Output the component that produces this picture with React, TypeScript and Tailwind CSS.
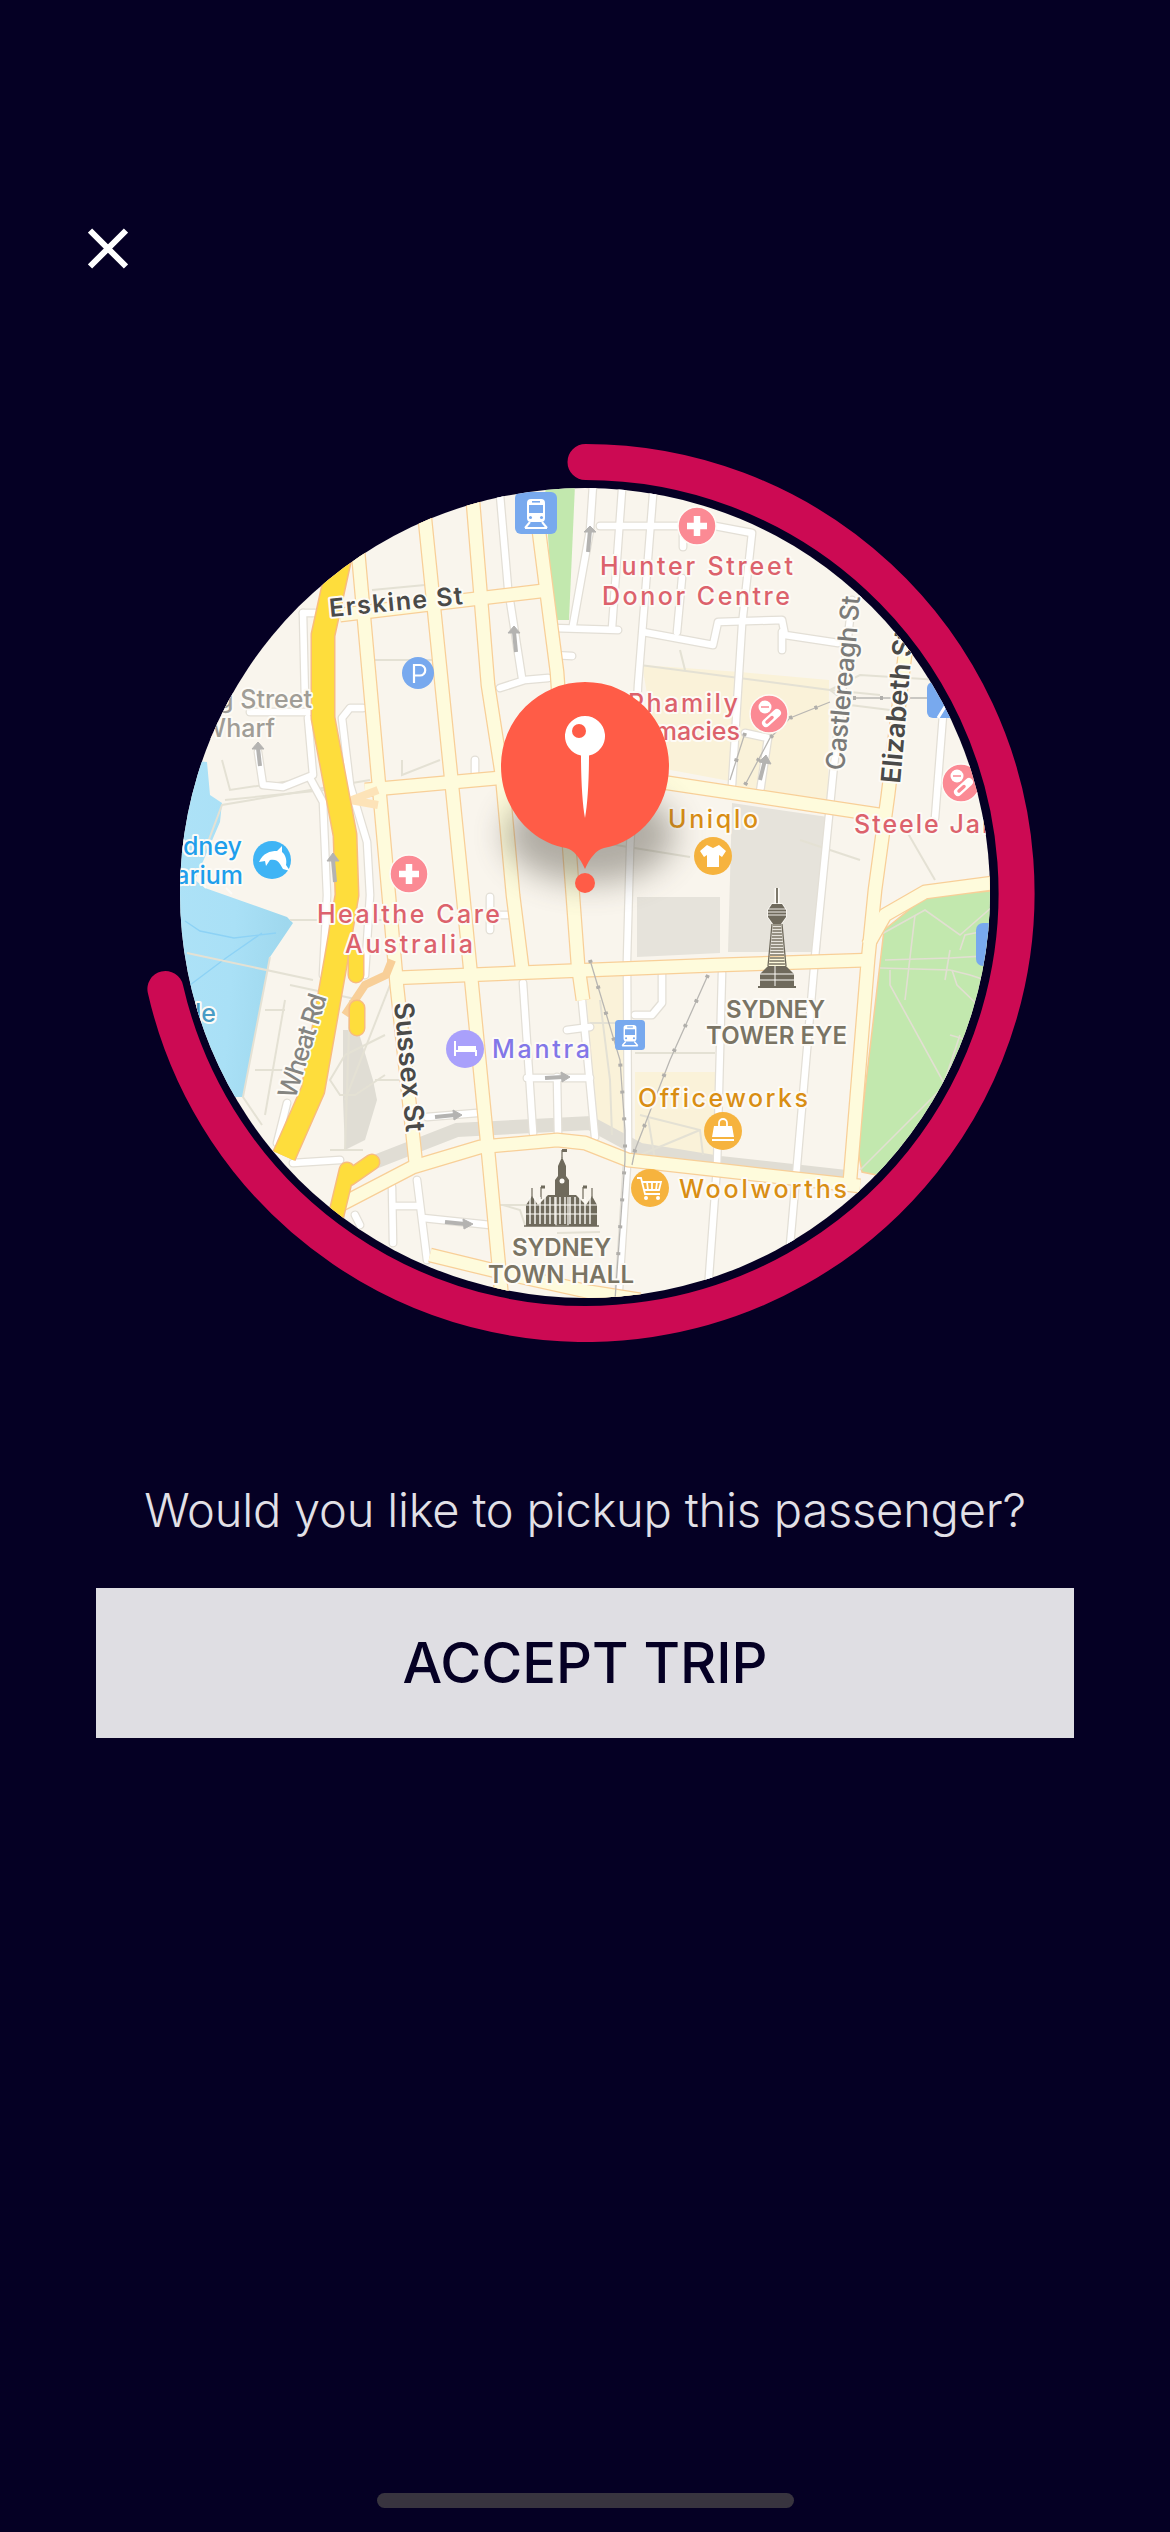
import React from "react";

const FONT = "Inter, 'Liberation Sans', sans-serif";
const C = { cx: 585, cy: 893, r: 405 };

type P = number[];
const d = (p: P) => {
  let s = `M${p[0]} ${p[1]}`;
  for (let i = 2; i < p.length; i += 2) s += `L${p[i]} ${p[i + 1]}`;
  return s;
};

const cream: P[] = [
  [357, 540, 397, 987, 416, 1165],
  [423, 500, 463, 895, 487, 1140, 503, 1310],
  [472, 490, 488, 685, 502, 775, 513, 895, 523, 975],
  [535, 500, 550, 618, 557, 672, 568, 830, 578, 965, 583, 1000],
  [340, 615, 550, 590],
  [365, 790, 510, 777, 585, 770, 668, 783, 880, 815],
  [908, 630, 888, 795, 875, 890, 868, 960, 850, 1180],
  [393, 978, 590, 970, 718, 965, 870, 960],
  [340, 1205, 413, 1167, 480, 1147, 557, 1140, 585, 1143, 628, 1160, 718, 1170, 860, 1186],
  [430, 1255, 500, 1272, 590, 1292, 640, 1300],
  [868, 945, 885, 915, 925, 892, 1000, 882],
];

const white: P[] = [
  [500, 495, 508, 588, 522, 678],
  [500, 688, 525, 680, 548, 678],
  [573, 625, 590, 530, 593, 485],
  [553, 628, 618, 630],
  [553, 655, 572, 656],
  [363, 708, 350, 708, 342, 718, 350, 785, 367, 842, 370, 895, 365, 975],
  [303, 613, 316, 613],
  [303, 613, 305, 700],
  [250, 712, 310, 712],
  [308, 718, 313, 775, 283, 787, 263, 785, 258, 752],
  [310, 778, 323, 802, 327, 895, 323, 975],
  [277, 1143, 287, 1103],
  [475, 760, 475, 775],
  [622, 490, 612, 628],
  [653, 495, 638, 685, 630, 850, 627, 960, 628, 1150, 618, 1305],
  [600, 526, 678, 526],
  [715, 526, 752, 533, 742, 625, 732, 785],
  [643, 632, 713, 645, 718, 622, 782, 620, 785, 635, 838, 643],
  [782, 632, 782, 650],
  [677, 632, 682, 578],
  [683, 528, 683, 547],
  [745, 733, 768, 738, 760, 792],
  [852, 600, 833, 775, 815, 957, 792, 1223, 785, 1300],
  [943, 715, 935, 818],
  [722, 973, 717, 1167, 708, 1290],
  [662, 973, 662, 1003, 652, 1015, 635, 1015],
  [523, 983, 533, 1133],
  [580, 980, 595, 1137],
  [557, 1077, 558, 1133],
  [527, 1078, 590, 1078],
  [567, 1030, 590, 1027],
  [427, 1117, 477, 1113],
  [293, 1163, 340, 1160],
  [392, 1187, 393, 1243],
  [417, 1180, 427, 1260],
  [393, 1206, 417, 1206],
  [423, 1218, 490, 1225],
  [490, 897, 490, 930],
  [490, 915, 512, 915],
  [355, 1215, 360, 1225],
];

const thin: P[] = [
  [375, 660, 440, 660],
  [372, 590, 425, 585],
  [402, 760, 402, 775, 440, 760],
  [222, 760, 230, 790, 310, 778],
  [225, 800, 325, 790],
  [205, 850, 222, 805, 370, 780],
  [187, 953, 313, 980],
  [290, 920, 293, 920, 400, 920],
  [270, 957, 243, 1097, 262, 1125],
  [285, 1000, 265, 1115],
  [265, 1010, 285, 1010],
  [255, 1070, 285, 1070],
  [290, 985, 360, 1000],
  [345, 1055, 385, 1035],
  [345, 1055, 330, 1080, 340, 1095, 355, 1095, 385, 1075],
  [350, 1000, 345, 1150],
  [375, 1080, 405, 1080],
  [390, 985, 345, 1100],
  [363, 1150, 330, 1150],
  [640, 665, 830, 690, 880, 695],
  [680, 650, 685, 670],
  [830, 690, 860, 675, 940, 680],
  [830, 690, 850, 705, 890, 710],
  [690, 857, 585, 840],
  [800, 840, 860, 860],
  [906, 830, 935, 880],
  [635, 1053, 715, 1053],
  [640, 1115, 700, 1130, 703, 1155],
  [648, 1118, 655, 1160],
  [640, 1155, 700, 1130],
  [600, 1000, 610, 1080, 612, 1135],
  [590, 1023, 625, 1023],
  [503, 1205, 520, 1210, 525, 1225],
  [500, 1205, 530, 1205],
  [557, 1233, 600, 1232],
];

const parkPaths: P[] = [
  [885, 960, 950, 958, 1000, 955],
  [880, 935, 925, 910, 960, 935, 1000, 900],
  [880, 968, 950, 970, 970, 975, 1000, 985],
  [890, 970, 890, 985, 945, 1085, 975, 1130],
  [905, 1000, 915, 915],
  [950, 950, 945, 980],
  [945, 1085, 860, 1170],
  [960, 1035, 945, 1080],
  [950, 1035, 985, 1045],
  [985, 1000, 1000, 1010],
  [952, 970, 957, 985, 985, 1012],
  [960, 950, 965, 935, 990, 930],
];

const rail: P[] = [
  [590, 960, 620, 1060, 625, 1130, 625, 1160, 615, 1300],
  [708, 975, 670, 1060, 635, 1150, 632, 1165],
  [745, 785, 770, 738, 790, 718, 830, 702],
  [853, 698, 930, 698],
  [745, 733, 730, 780],
];

type LProps = { x: number; y: number; t: string; c: string; s?: number; w?: number; len?: number; a?: "start" | "end" | "middle"; r?: number; ls?: number };
function L({ x, y, t, c, s = 25, w = 500, len, a = "start", r = 0, ls }: LProps) {
  return (
    <text
      x={x}
      y={y}
      fill={c}
      fontSize={s}
      fontWeight={w}
      textAnchor={a}
      textLength={len}
      lengthAdjust={len ? "spacing" : undefined}
      letterSpacing={ls}
      stroke="#fdfbf6"
      strokeWidth={4}
      strokeLinejoin="round"
      paintOrder="stroke"
      transform={r ? `rotate(${r} ${x} ${y})` : undefined}
    >
      {t}
    </text>
  );
}

const RED = "#dc626c";
const ORG = "#d98e14";
const GRN = "#7a7464";
const PNK = "#fb8a94";
const OC = "#f6b33e";
const BLU = "#78a9ee";

function Cross({ x, y }: { x: number; y: number }) {
  return (
    <g>
      <circle cx={x} cy={y} r={19} fill={PNK} stroke="#fdfbf6" strokeWidth={1.5} />
      <path d={`M${x - 10} ${y}H${x + 10}M${x} ${y - 10}V${y + 10}`} stroke="#fff" strokeWidth={6.5} />
    </g>
  );
}

function Pill({ x, y }: { x: number; y: number }) {
  return (
    <g>
      <circle cx={x} cy={y} r={19} fill={PNK} stroke="#fdfbf6" strokeWidth={1.5} />
      <circle cx={x - 4} cy={y - 7} r={6.5} fill="#fff" />
      <path d={`M${x - 8} ${y - 7}h8`} stroke={PNK} strokeWidth={1.5} />
      <path d={`M${x - 3} ${y + 9}L${x + 8} ${y - 1}`} stroke="#fff" strokeWidth={8} strokeLinecap="round" />
      <path d={`M${x - 2} ${y + 8}L${x + 3} ${y + 3.5}`} stroke={PNK} strokeWidth={3.5} strokeLinecap="round" />
    </g>
  );
}

function Train({ x, y, s, r = 6 }: { x: number; y: number; s: number; r?: number }) {
  const k = s / 42;
  return (
    <g transform={`translate(${x} ${y}) scale(${k})`}>
      <rect width={42} height={42} rx={r} fill={BLU} />
      <rect x={12} y={7} width={18} height={23} rx={4} fill="#fff" />
      <rect x={14} y={13} width={14} height={8} fill={BLU} />
      <rect x={17} y={9} width={8} height={1.6} fill={BLU} />
      <circle cx={15.5} cy={25.5} r={1.5} fill={BLU} />
      <circle cx={26.5} cy={25.5} r={1.5} fill={BLU} />
      <path d="M15 30L10 36M27 30L32 36M10 36H32" stroke="#fff" strokeWidth={2} fill="none" />
    </g>
  );
}

function Tower() {
  const rows = [];
  for (let y = 925; y < 966; y += 3) rows.push(<path key={y} d={`M${777 - 4 - (y - 925) * 0.1} ${y}H${777 + 4 + (y - 925) * 0.1}`} stroke="#7a7464" strokeWidth={1.3} />);
  return (
    <g>
      <path d="M777 888V906" stroke="#fdfbf6" strokeWidth={5} />
      <path d="M777 888V908" stroke="#6f6a5c" strokeWidth={1.8} />
      <path d="M772 904H782L786 910V917L781 924H773L768 917V910Z" fill="#6f6a5c" stroke="#fdfbf6" strokeWidth={1.5} paintOrder="stroke" />
      <path d="M768 909H786M768 912H786M768 915H786" stroke="#fdfbf6" strokeWidth={0.9} />
      {rows}
      <path d="M772 924L768 966M782 924L786 966" stroke="#6f6a5c" strokeWidth={1.3} />
      <path d="M768 966L760 974V986H794V974L786 966Z" fill="#6f6a5c" />
      <path d="M760 974H794M760 980H794M775 966V986" stroke="#fdfbf6" strokeWidth={1} />
      <path d="M758 987H796" stroke="#6f6a5c" strokeWidth={1.8} />
    </g>
  );
}

function TownHall() {
  const c = "#6f6a5c";
  const cols = [];
  for (let x = 530; x < 595; x += 5) cols.push(<path key={x} d={`M${x} 1197V1224`} stroke="#fdfbf6" strokeWidth={1.4} />);
  return (
    <g>
      <path d="M562 1150V1158" stroke={c} strokeWidth={1.2} />
      <rect x={562} y={1149} width={5} height={3} fill={c} />
      <path d="M562 1157L566 1166V1176L569 1180V1197H555V1180L558 1176V1166Z" fill={c} />
      <circle cx={562} cy={1181} r={2.5} fill="#fdfbf6" />
      <path d="M526 1226V1205L532 1196L538 1205L548 1195L576 1195L586 1205L592 1196L597 1205V1226Z" fill={c} />
      <path d="M541 1187h4M583 1187h4" stroke={c} strokeWidth={3} />
      <path d="M541 1187v12M583 1187v12M532 1188v9M592 1188v9" stroke={c} strokeWidth={1.2} />
      {cols}
      <path d="M526 1205H597M526 1214H597M556 1197V1226H568V1197" stroke="#fdfbf6" strokeWidth={1.2} fill="none" />
      <path d="M524 1226H599" stroke={c} strokeWidth={1.6} />
    </g>
  );
}

function MapArt() {
  return (
    <g>
      <rect x={170} y={480} width={830} height={830} fill="#f9f5ed" />
      {/* water */}
      <path d="M180 760L207 762L210 795L222 803L220 822L195 880L205 888L287 917L293 923L270 957L243 1097L170 1097Z" fill="url(#water)" />
      <path d="M185 921L200 931L234 938L276 933M190 985L226 958L262 933" stroke="#8dd2f5" strokeWidth={1.4} fill="none" />
      <path d="M200 880L206 888M226 888L232 894" stroke="#fdfbf6" strokeWidth={2} />
      {/* zones */}
      <path d="M642 665L740 672L829 680L828 800L740 790L735 782L660 768Z" fill="#faf2d9" />
      <path d="M635 1072H715V1160L635 1148Z" fill="#faf2d9" />
      <path d="M585 975H625V1140L596 1130Z" fill="#faf2d9" />
      <path d="M545 485H575L569 620L553 620Z" fill="#c2e8ae" />
      <path d="M732 803L828 817L820 952L728 952Z" fill="#e6e3db" />
      <path d="M637 897H720V953L637 957Z" fill="#e6e3db" />
      <path d="M343 1030L358 1030L373 1080L377 1100L365 1140L345 1150L343 1100Z" fill="#e0ddd4" />
      <path d="M367 1165L457 1130L590 1123L640 1150L720 1163L855 1178" stroke="#e0ddd4" strokeWidth={14} fill="none" />
      {/* park */}
      <path d="M884 930L925 897L1000 890V1200L862 1172L858 1150Z" fill="#c2e8ae" stroke="#f8cf98" strokeWidth={1.5} />
      <g stroke="#e2dfd2" strokeWidth={1.6} fill="none">
        {parkPaths.map((p, i) => (
          <path key={i} d={d(p)} />
        ))}
      </g>
      {/* thin lines */}
      <g stroke="#e4e1d4" strokeWidth={2} fill="none">
        {thin.map((p, i) => (
          <path key={i} d={d(p)} />
        ))}
      </g>
      {/* white roads */}
      <g stroke="#e3dfd6" strokeWidth={9} fill="none" strokeLinejoin="round" strokeLinecap="round">
        {white.map((p, i) => (
          <path key={i} d={d(p)} />
        ))}
      </g>
      <g stroke="#ffffff" strokeWidth={6.5} fill="none" strokeLinejoin="round" strokeLinecap="round">
        {white.map((p, i) => (
          <path key={i} d={d(p)} />
        ))}
      </g>
      {/* cream roads */}
      <g stroke="#f8cf98" strokeWidth={15} fill="none" strokeLinejoin="round">
        {cream.map((p, i) => (
          <path key={i} d={d(p)} />
        ))}
      </g>
      <g stroke="#fefbdc" strokeWidth={12.5} fill="none" strokeLinejoin="round">
        {cream.map((p, i) => (
          <path key={i} d={d(p)} />
        ))}
      </g>
      {/* orange ramp */}
      <path d="M392 960L386 975L365 985L345 1015" stroke="#f8cf98" strokeWidth={8} fill="none" />
      <path d="M352 800L378 790M350 800L378 805" stroke="#fde3b8" strokeWidth={8} fill="none" />
      {/* highway */}
      <g fill="none" strokeLinejoin="round" strokeLinecap="round">
        <path d="M346 530L323 635L323 718L345 835L347 895L336 960L313 1090L284 1156" stroke="#f8bc7e" strokeWidth={25} strokeLinecap="butt" />
        <path d="M346 530L323 635L323 718L345 835L347 895L336 960L313 1090L284 1156" stroke="#fedd3c" strokeWidth={22} strokeLinecap="butt" />
        <path d="M356 955V975M357 1008V1028" stroke="#f8bc7e" strokeWidth={17} />
        <path d="M356 955V975M357 1008V1028" stroke="#fedd3c" strokeWidth={14} />
        <path d="M335 1220L347 1170M349 1178L372 1162" stroke="#f8bc7e" strokeWidth={17} />
        <path d="M335 1220L347 1170M349 1178L372 1162" stroke="#fedd3c" strokeWidth={14} />
      </g>
      {/* rail */}
      <g stroke="#b9b7b3" strokeWidth={1.3} fill="none">
        {rail.map((p, i) => (
          <path key={i} d={d(p)} />
        ))}
      </g>
      <g stroke="#b0aeaa" strokeWidth={4} fill="none" strokeDasharray="3 24">
        {rail.map((p, i) => (
          <path key={i} d={d(p)} />
        ))}
      </g>
      {/* arrows */}
      <g stroke="#b4b3b1" strokeWidth={4} fill="#b4b3b1">
        <path d="M588 552L590 530" />
        <path d="M584 532L590 526L596 532Z" strokeWidth={1} />
        <path d="M516 652L514 632" />
        <path d="M508 633L514 626L520 633Z" strokeWidth={1} />
        <path d="M260 766L258 748" />
        <path d="M252 749L258 742L264 749Z" strokeWidth={1} />
        <path d="M335 882L333 860" />
        <path d="M327 861L333 853L339 861Z" strokeWidth={1} />
        <path d="M760 780L765 760" />
        <path d="M759 762L766 755L771 764Z" strokeWidth={1} />
        <path d="M435 1117L455 1115" />
        <path d="M453 1110L462 1115L454 1120Z" strokeWidth={1} />
        <path d="M545 1078L563 1077" />
        <path d="M561 1072L570 1077L562 1082Z" strokeWidth={1} />
        <path d="M445 1222L465 1224" />
        <path d="M463 1219L473 1224L464 1229Z" strokeWidth={1} />
      </g>

      {/* labels */}
      <g fontFamily={FONT}>
        <L x={330} y={617} t="Erskine St" c="#4a4a48" w={600} s={25} len={134} r={-5.5} />
        <L x={600} y={575} t="Hunter Street" c={RED} len={193} />
        <L x={602} y={605} t="Donor Centre" c={RED} len={188} />
        <L x={312} y={708} t="King Street" c="#a09d96" a="end" s={25} />
        <L x={275} y={737} t="Wharf" c="#a09d96" a="end" s={25} />
        <L x={242} y={855} t="Sydney" c="#1f9fec" a="end" s={25} />
        <L x={243} y={884} t="Aquarium" c="#1f9fec" a="end" s={25} />
        <L x={628} y={712} t="Phamily" c={RED} len={110} />
        <L x={740} y={740} t="Pharmacies" c={RED} a="end" />
        <L x={668} y={828} t="Uniqlo" c={ORG} len={90} />
        <L x={854} y={833} t="Steele James" c={RED} ls={2} />
        <L x={317} y={923} t="Healthe Care" c={RED} len={183} />
        <L x={345} y={953} t="Australia" c={RED} len={128} />
        <L x={492} y={1058} t="Mantra" c="#8277e8" len={98} />
        <L x={394} y={1003} t="Sussex St" c="#4a4a48" w={600} s={27} len={130} r={84.7} />
        <L x={295} y={1100} t="Wheat Rd" c="#858581" s={26} len={108} r={-72.7} />
        <L x={844} y={771} t="Castlereagh St" c="#7b7b79" s={26} len={175} r={-84.7} />
        <L x={900} y={784} t="Elizabeth St" c="#4a4a48" w={600} s={27} r={-85} />
        <L x={726} y={1018} t="SYDNEY" c={GRN} w={600} s={24} len={99} />
        <L x={706} y={1044} t="TOWER EYE" c={GRN} w={600} s={24} len={141} />
        <L x={638} y={1107} t="Officeworks" c={ORG} len={170} />
        <L x={679} y={1198} t="Woolworths" c={ORG} len={168} />
        <L x={512} y={1256} t="SYDNEY" c={GRN} w={600} s={24} len={99} />
        <L x={488} y={1283} t="TOWN HALL" c={GRN} w={600} s={24} len={146} />
        <L x={216} y={1022} t="Cockle" c="#4a9cc5" a="end" />
      </g>

      {/* POIs */}
      <Train x={515} y={492} s={42} />
      <Train x={615} y={1020} s={30} r={5} />
      <rect x={927} y={682} width={42} height={36} rx={6} fill={BLU} />
      <path d="M938 718L946 705L954 718" stroke="#fff" strokeWidth={3} fill="none" />
      <rect x={976} y={923} width={42} height={43} rx={7} fill={BLU} />
      <Cross x={697} y={526} />
      <Cross x={409} y={874} />
      <Pill x={769} y={714} />
      <Pill x={961} y={783} />
      <circle cx={418} cy={673} r={16} fill={BLU} />
      <path d="M414 683V665H420A5.2 5.2 0 0 1 420 675.5H414" stroke="#fff" strokeWidth={2.2} fill="none" />
      {/* dolphin */}
      <circle cx={272} cy={860} r={19} fill="#3fb4f5" />
      <path d="M259 862C263 853 270 851 277 851L282 846L282 852C286 855 287 861 286 865L290 871L283 869L280 864C278 860 274 859 270 860L266 866L265 861Z" fill="#fff" />
      {/* shirt */}
      <circle cx={713} cy={856} r={19} fill={OC} />
      <path d="M707 845L713 848L719 845L726 851L722 857L719 855V867H707V855L704 857L700 851Z" fill="#fff" />
      {/* bag */}
      <circle cx={723} cy={1131} r={19} fill={OC} />
      <path d="M714 1126H732L734 1137H712Z" fill="#fff" />
      <path d="M719 1126V1123A4 4 0 0 1 727 1123V1126" stroke="#fff" strokeWidth={1.8} fill="none" />
      <path d="M712 1140H734" stroke="#fff" strokeWidth={2} />
      {/* cart */}
      <circle cx={650} cy={1188} r={19} fill={OC} />
      <path d="M637 1178H641L645 1194H660M642 1182H661L659 1190H644M647 1182L648 1190M652 1182V1190M657 1182L656 1190" stroke="#fff" strokeWidth={1.8} fill="none" />
      <circle cx={646} cy={1198} r={2} fill="#fff" />
      <circle cx={658} cy={1198} r={2} fill="#fff" />
      {/* bed */}
      <circle cx={465} cy={1049} r={19} fill="#a9a0fb" />
      <path d="M455 1041V1056M455 1051H476V1056" stroke="#fff" strokeWidth={2} fill="none" />
      <rect x={458} y={1046} width={18} height={4} fill="#fff" />
      <Tower />
      <TownHall />
    </g>
  );
}

function Pin() {
  return (
    <g>
      <ellipse cx={590} cy={835} rx={85} ry={48} fill="#4e4a40" opacity={0.42} filter="url(#blur)" />
      <path
        d="M585 682A84 84 0 0 1 669 766C669 808 640 842 604 848C596 850 590 858 585 869C580 858 574 850 566 848C530 842 501 808 501 766A84 84 0 0 1 585 682Z"
        fill="#ff5c47"
      />
      <circle cx={585} cy={883} r={10} fill="#ff5c47" />
      <path d="M585 716A20 20 0 0 1 589 755.6C589 780 587.5 805 585 818C582.5 805 581 780 581 755.6A20 20 0 0 1 585 716Z" fill="#fff" />
      <circle cx={579} cy={731} r={7} fill="#ff5c47" />
    </g>
  );
}

export default function App() {
  return (
    <div className="flex min-h-[2532px] w-[1170px] flex-col bg-[#050024] font-['Inter','Liberation_Sans',sans-serif]">
      <div className="pl-[88px] pt-[228px]">
        <svg width="40" height="41" viewBox="0 0 40 41" className="block">
          <path d="M2 2.5L38 38.5M38 2.5L2 38.5" stroke="#fff" strokeWidth="6" />
        </svg>
      </div>
      <div className="ml-[135px] mt-[173px] h-[900px] w-[900px]">
        <svg width="900" height="900" viewBox="135 442 900 900" className="block">
          <defs>
            <clipPath id="mapclip">
              <circle cx={C.cx} cy={C.cy} r={C.r} />
            </clipPath>
            <linearGradient id="water" x1="0" y1="0" x2="1" y2="0.2">
              <stop offset="0" stopColor="#aee2f7" />
              <stop offset="0.6" stopColor="#a9e0f6" />
              <stop offset="1" stopColor="#9fd8ee" />
            </linearGradient>
            <filter id="blur" x="-40%" y="-60%" width="180%" height="220%">
              <feGaussianBlur stdDeviation="16" />
            </filter>
          </defs>
          <g clipPath="url(#mapclip)">
            <MapArt />
            <Pin />
          </g>
          <path d="M585.5 462A431 431 0 1 1 165.4 989" fill="none" stroke="#cc0a53" strokeWidth="36" strokeLinecap="round" />
        </svg>
      </div>
      <p className="mt-[138px] text-center text-[47px] font-light leading-[60px] tracking-[-0.2px] text-[#e2e0e7]">Would you like to pickup this passenger?</p>
      <button className="ml-[96px] mt-[48px] h-[150px] w-[978px] bg-[#dfdee3] text-center text-[56px] font-medium text-[#050024]">ACCEPT TRIP</button>
      <div className="mb-[24px] ml-[377px] mt-auto h-[15px] w-[417px] rounded-full bg-[#38343f]" />
    </div>
  );
}
